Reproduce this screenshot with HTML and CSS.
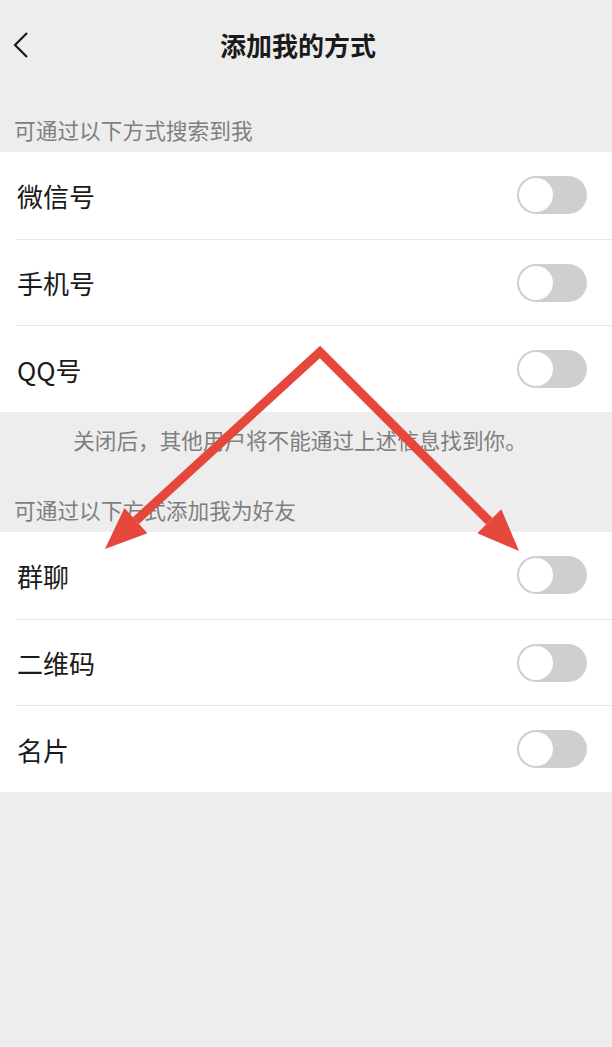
FILE: index.html
```html
<!DOCTYPE html>
<html lang="zh-CN">
<head>
  <meta charset="UTF-8" />
  <title>添加我的方式</title>
  <meta name="viewport" content="width=device-width, initial-scale=1" />
  <link rel="stylesheet" href="styles.css">
</head>
<body>
  <div class="page">
    <!-- 顶部导航 -->
    <header class="nav-bar">
      <button class="back-btn" aria-label="返回">
        <svg viewBox="0 0 18 28" width="18" height="28">
          <path d="M15 2 L3 14 L15 26" fill="none" stroke="#1a1a1a" stroke-width="2.2" />
        </svg>
      </button>
      <h1>添加我的方式</h1>
    </header>

    <!-- 搜索方式 -->
    <div class="section-label">可通过以下方式搜索到我</div>
    <ul class="setting-list">
      <li class="setting-row"><span>微信号</span><span class="switch"></span></li>
      <li class="setting-row"><span>手机号</span><span class="switch"></span></li>
      <li class="setting-row"><span>QQ号</span><span class="switch"></span></li>
    </ul>
    <p class="section-note">关闭后，其他用户将不能通过上述信息找到你。</p>

    <!-- 添加方式 -->
    <div class="section-label">可通过以下方式添加我为好友</div>
    <ul class="setting-list">
      <li class="setting-row"><span>群聊</span><span class="switch"></span></li>
      <li class="setting-row"><span>二维码</span><span class="switch"></span></li>
      <li class="setting-row"><span>名片</span><span class="switch"></span></li>
    </ul>

    <!-- 标注箭头 -->
    <svg class="markup" viewBox="0 0 612 1047" width="612" height="1047">
      <polyline points="135.9,520.6 320,352 489.3,521.3" fill="none" stroke="#e5473c" stroke-width="9" stroke-linejoin="miter" stroke-miterlimit="10" />
      <polygon points="105,549 147.4,533.2 124.4,508.1" fill="#e5473c" />
      <polygon points="519,551 501.3,509.3 477.3,533.3" fill="#e5473c" />
    </svg>
  </div>
</body>
</html>
```

FILE: styles.css
```css
:root {
  --bg: #ededed;
  --text: #1a1a1a;
  --muted: #7f7f7f;
  --line: #e6e6e6;
  --switch-off: #cfcfcf;
}

* { box-sizing: border-box; margin: 0; padding: 0; }

html, body {
  width: 100%;
  height: 100%;
  background: var(--bg);
  font-family: "Noto Sans CJK SC", "Noto Sans", sans-serif;
  color: var(--text);
  overflow: hidden;
}

.page {
  position: relative;
  width: 612px;
  height: 1047px;
}

.nav-bar {
  position: relative;
  height: 90px;
  display: flex;
  align-items: center;
  justify-content: center;
}

.nav-bar h1 {
  font-size: 26px;
  font-weight: 700;
  margin: -2px 16px 0 0;
}

.back-btn {
  position: absolute;
  left: 12px;
  top: 31px;
  background: none;
  border: none;
  display: flex;
}

.section-label {
  padding: 26px 0 9px 14px;
  font-size: 21.7px;
  line-height: 27px;
  color: var(--muted);
}

.setting-list {
  list-style: none;
  background: #fff;
}

.setting-row {
  height: 86.7px;
  margin-left: 17px;
  padding-right: 25px;
  display: flex;
  align-items: center;
  justify-content: space-between;
  font-size: 26px;
  border-top: 1px solid var(--line);
}
.setting-row:first-child { border-top: none; }

.switch {
  width: 70px;
  height: 38px;
  border-radius: 19px;
  background: var(--switch-off);
  padding: 2px;
  display: flex;
}
.switch::before {
  content: "";
  width: 34px;
  height: 34px;
  border-radius: 50%;
  background: #fff;
}

.section-note {
  padding: 13px 0 16px;
  line-height: 29px;
  font-size: 21.6px;
  color: var(--muted);
  text-align: center;
  margin-left: -12px;
}

.markup {
  position: absolute;
  inset: 0;
  pointer-events: none;
}
```
